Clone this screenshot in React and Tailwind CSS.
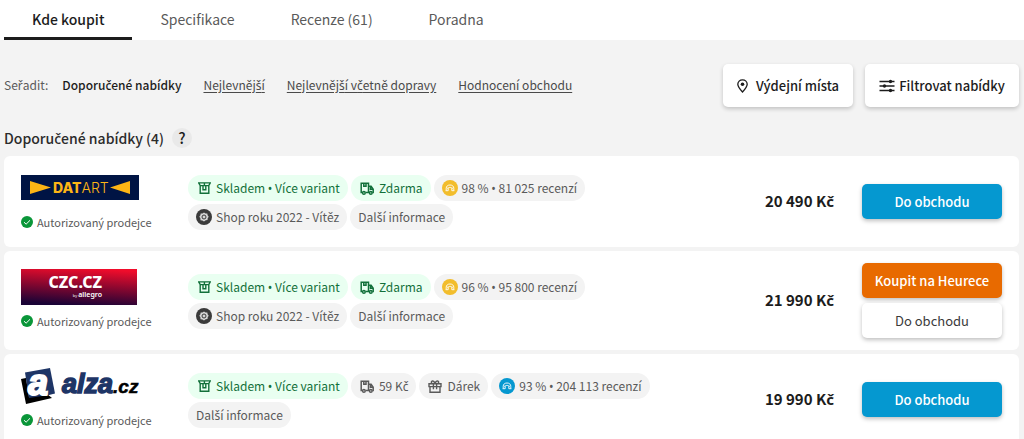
import React, { useState } from "react";

const tabs = ["Kde koupit", "Specifikace", "Recenze (61)", "Poradna"];

const sortOptions = [
  "Doporučené nabídky",
  "Nejlevnější",
  "Nejlevnější včetně dopravy",
  "Hodnocení obchodu",
];

const offers = [
  {
    shop: "datart",
    price: "20 490 Kč",
    chips: [
      { icon: "box", text: "Skladem • Více variant", green: true },
      { icon: "truck", text: "Zdarma", green: true },
      { icon: "gold", text: "98 % • 81 025 recenzí" },
      { icon: "award", text: "Shop roku 2022 - Vítěz" },
      { text: "Další informace" },
    ],
  },
  {
    shop: "czc",
    price: "21 990 Kč",
    buyDirect: true,
    chips: [
      { icon: "box", text: "Skladem • Více variant", green: true },
      { icon: "truck", text: "Zdarma", green: true },
      { icon: "gold", text: "96 % • 95 800 recenzí" },
      { icon: "award", text: "Shop roku 2022 - Vítěz" },
      { text: "Další informace" },
    ],
  },
  {
    shop: "alza",
    price: "19 990 Kč",
    chips: [
      { icon: "box", text: "Skladem • Více variant", green: true },
      { icon: "truck", text: "59 Kč" },
      { icon: "gift", text: "Dárek" },
      { icon: "blue", text: "93 % • 204 113 recenzí" },
      { text: "Další informace" },
    ],
  },
];

// The main font has no č, ř, š and a very wide bullet, take those from Noto Sans
function Czech({ children }) {
  return (
    <span className="whitespace-nowrap">
      {children.split(/([čřš•])/).map((part, index) =>
        index % 2 === 1 ? (
          <span key={index} className="font-['Noto_Sans',sans-serif] leading-none">
            {part}
          </span>
        ) : (
          part
        )
      )}
    </span>
  );
}

function DatartLogo() {
  return (
    <svg width="118" height="25" viewBox="0 0 118 25" role="img" aria-label="Datart">
      <rect width="118" height="25" fill="#001444" />
      <path d="M9 6v13l21-6.5zM109 6v13l-20-6.5z" fill="#fdb515" />
      <text x="32" y="17.5" fontSize="14" fill="#fdb515" fontFamily="Inter, sans-serif">
        <tspan fontWeight="800">DAT</tspan>
        <tspan fontWeight="300">ART</tspan>
      </text>
    </svg>
  );
}

function CzcLogo() {
  return (
    <svg width="116" height="36" viewBox="0 0 116 36" role="img" aria-label="CZC.cz">
      <defs>
        <linearGradient id="czc" x1="0.65" y1="0" x2="0.45" y2="1">
          <stop offset="0" stopColor="#f00c2b" />
          <stop offset="0.5" stopColor="#85072f" />
          <stop offset="1" stopColor="#1a0336" />
        </linearGradient>
      </defs>
      <rect width="116" height="36" fill="url(#czc)" />
      <g fill="#fff" fontFamily="'Noto Sans', sans-serif">
        <text x="81" y="19" fontSize="16" fontWeight="800" textAnchor="end">
          CZC.CZ
        </text>
        <text x="81" y="28" fontSize="7" fontWeight="600" textAnchor="end">
          <tspan fontSize="4" fontWeight="400">by </tspan>allegro
        </text>
      </g>
    </svg>
  );
}

function AlzaLogo() {
  return (
    <svg
      width="118"
      height="36"
      viewBox="0 0 118 36"
      role="img"
      aria-label="Alza.cz"
      className="overflow-visible"
      fontFamily="'Liberation Sans', sans-serif"
      fontWeight="700"
    >
      <path d="M0 11l5-1 3 19 18-3 5 4-26 6z" fill="#000" />
      <path d="M4 4.500L29 0l5 25.500-6 1.500-20 3z" fill="#1e3566" />
      <text x="7" y="27" fontSize="36" fill="#fff" stroke="#fff" strokeWidth="2" fontStyle="italic">
        a
      </text>
      <text y="25" fontStyle="italic">
        <tspan x="41" fontSize="27" fill="#1e3566" stroke="#1e3566" strokeWidth="1.500">
          alza
        </tspan>
        <tspan fontSize="19" fill="#000" stroke="#000" strokeWidth="0.500">
          .cz
        </tspan>
      </text>
    </svg>
  );
}

function ShopLogo({ shop }) {
  if (shop === "datart") return <DatartLogo />;
  if (shop === "czc") return <CzcLogo />;
  return <AlzaLogo />;
}

function CheckIcon() {
  return (
    <svg width="12" height="12" viewBox="0 0 12 12" aria-hidden="true">
      <circle cx="6" cy="6" r="6" fill="#0a9639" />
      <path d="M3 6.2l2.1 2L9 4.3" fill="none" stroke="#fff" />
    </svg>
  );
}

function BoxIcon() {
  return (
    <svg width="13" height="12" viewBox="0 0 13 12" fill="none" stroke="currentColor" strokeWidth="1.4" aria-hidden="true">
      <path d="M2.200 3.700v7.500h8.600V3.700M.7.900l1.500 2.700h8.600L12.300.9zM5 3.700v4h2.800v-4M6.400.9v2.700" />
    </svg>
  );
}

function TruckIcon() {
  return (
    <svg width="14" height="13" viewBox="0 0 14 13" fill="none" stroke="currentColor" strokeWidth="1.5" aria-hidden="true">
      <path d="M2.2 10.500H1.200V1.200h7.300v9.300H5.600M3.800 1.200v3h2.200v-3M8.500 4.200h2.600l2.100 3v3.300h-.9M8.900 10.500h.4M10.500 4.500v2.700h2.500" />
      <circle cx="3.9" cy="10.9" r="1.300" />
      <circle cx="10.8" cy="10.9" r="1.300" />
    </svg>
  );
}

function GiftIcon() {
  return (
    <svg width="14" height="13" viewBox="0 0 14 13" fill="none" stroke="currentColor" strokeWidth="1.4" aria-hidden="true">
      <path d="M1 3.800h12v2.800H1zM2 6.600v5.700h10V6.600M5.400 3.800v5.400M8.600 3.800v5.400M7 3.600C6.400 1.400 5 .7 4 1.100c-1 .5-.8 2 .4 2.600M7 3.600c.6-2.200 2-2.900 3-2.500 1 .5.8 2-.4 2.600" />
    </svg>
  );
}

function AwardIcon() {
  return (
    <svg width="16" height="16" viewBox="0 0 16 16" aria-hidden="true">
      <circle cx="8" cy="8" r="8" fill="#3b3b3b" />
      <path
        d="M8 3.400l1.500 1 1.800 0 .3 1.800 1.100 1.500-1 1.500-.2 1.900-1.800.2L8 12.600l-1.600-1.200-1.900-.2-.1-1.900-1.100-1.500 1.100-1.600.3-1.800h1.800z"
        fill="#d6d6d6"
      />
      <circle cx="8" cy="8" r="2" fill="none" stroke="#3b3b3b" />
    </svg>
  );
}

function RatingIcon({ fill }) {
  return (
    <svg width="16" height="16" viewBox="0 0 16 16" aria-hidden="true">
      <circle cx="8" cy="8" r="8" fill={fill} />
      <path
        d="M4.200 10.500V8.300C4.200 6.200 5.700 5 8 5s3.800 1.200 3.800 3.300v2.200M3.600 10.700h2.600V9c0-1 .8-1.600 1.800-1.600s1.800.6 1.800 1.600v1.700h2.600M6.300 7.300l-1 1.400M9.700 7.300l1 1.400"
        fill="none"
        stroke="#fff"
        strokeWidth="0.9"
        strokeLinejoin="round"
      />
    </svg>
  );
}

function ChipIcon({ name }) {
  switch (name) {
    case "box":
      return <BoxIcon />;
    case "truck":
      return <TruckIcon />;
    case "gift":
      return <GiftIcon />;
    case "award":
      return <AwardIcon />;
    case "gold":
      return <RatingIcon fill="#f2bd2c" />;
    case "blue":
      return <RatingIcon fill="#0598d0" />;
    default:
      return null;
  }
}

function Chip({ chip }) {
  return (
    <li
      className={
        chip.green
          ? "flex h-[26px] items-center rounded-full bg-[#e9fff1] px-2 text-[#12703a]"
          : "flex h-[26px] items-center rounded-full bg-[#f3f3f3] px-2 text-[#5a5a5a]"
      }
    >
      {chip.icon && (
        <span className="mr-1 flex w-4 justify-center">
          <ChipIcon name={chip.icon} />
        </span>
      )}
      <Czech>{chip.text}</Czech>
    </li>
  );
}

function Offer({ offer }) {
  return (
    <article className="flex min-h-[91px] items-center rounded-md bg-white px-[17px] py-3">
      <div className="w-[167px] shrink-0 pb-1">
        <div className="flex h-9 items-center">
          <ShopLogo shop={offer.shop} />
        </div>
        <p className="mt-2 flex items-center gap-1 text-[11px] leading-4 text-[#5a5a5a]">
          <CheckIcon />
          Autorizovaný prodejce
        </p>
      </div>
      <ul className="flex min-w-0 flex-1 flex-wrap gap-[3px] pt-0.5 text-[12px]">
        {offer.chips.map((chip) => (
          <Chip key={chip.text} chip={chip} />
        ))}
      </ul>
      <p className="w-[100px] shrink-0 text-right text-[15px] font-bold text-[#1c1c1c]">
        <Czech>{offer.price}</Czech>
      </p>
      <div className="ml-7 flex w-[140px] shrink-0 flex-col gap-[5px] text-[13px]">
        {offer.buyDirect && (
          <button className="h-[35px] rounded-[5px] bg-[#e86a00] font-medium text-white shadow-[0_2px_4px_rgba(0,0,0,0.25)]">
            Koupit na Heurece
          </button>
        )}
        <button
          className={
            offer.buyDirect
              ? "h-[35px] rounded-[5px] bg-white text-[#3b3b3b] shadow-[0_2px_4px_rgba(0,0,0,0.25)]"
              : "h-[35px] rounded-[5px] bg-[#0598d0] font-medium text-white shadow-[0_2px_4px_rgba(0,0,0,0.25)]"
          }
        >
          Do obchodu
        </button>
      </div>
    </article>
  );
}

function App() {
  const [activeTab, setActiveTab] = useState(tabs[0]);
  const [sort, setSort] = useState(sortOptions[0]);

  return (
    <div className="h-screen overflow-hidden bg-[#f3f3f3] font-['Noto_Sans_CJK_SC','Noto_Sans',sans-serif] text-[#5a5a5a]">
      <nav className="flex h-10 bg-white pl-1 text-[14px]">
        {tabs.map((tab) => (
          <button
            key={tab}
            onClick={() => setActiveTab(tab)}
            className={
              tab === activeTab
                ? "border-b-3 border-[#1c1c1c] px-7 pt-0.5 font-medium text-[#1c1c1c]"
                : "border-b-3 border-transparent px-7 pt-0.5"
            }
          >
            {tab}
          </button>
        ))}
      </nav>

      <main className="pr-[5px] pl-1">
        <div className="flex items-center justify-between pt-6">
          <div className="flex items-center pb-0.5 text-[12px]">
            <span className="mr-3.5">
              <Czech>Seřadit:</Czech>
            </span>
            <div className="flex gap-[22px]">
              {sortOptions.map((option) => (
                <button
                  key={option}
                  onClick={() => setSort(option)}
                  className={
                    option === sort
                      ? "font-medium text-[#1c1c1c]"
                      : "text-[#4a4a4a] underline underline-offset-2"
                  }
                >
                  <Czech>{option}</Czech>
                </button>
              ))}
            </div>
          </div>
          <div className="flex gap-3 text-[13px] font-medium text-[#1c1c1c]">
            <button className="flex h-[43px] w-[130px] items-center justify-center gap-2 rounded-[5px] bg-white shadow-[0_2px_4px_rgba(0,0,0,0.2)]">
              <svg width="11" height="14" viewBox="0 0 11 14" aria-hidden="true">
                <path
                  d="M5.5.8C2.8.8.8 2.800.8 5.300.8 8 5.500 13 5.500 13s4.700-5 4.700-7.700c0-2.500-2-4.500-4.700-4.500z"
                  fill="none"
                  stroke="currentColor"
                  strokeWidth="1.3"
                />
                <circle cx="5.5" cy="5.3" r="1.8" fill="currentColor" />
              </svg>
              Výdejní místa
            </button>
            <button className="flex h-[43px] w-[154px] items-center justify-center gap-1 rounded-[5px] bg-white shadow-[0_2px_4px_rgba(0,0,0,0.2)]">
              <svg width="16" height="14" viewBox="0 0 16 14" fill="currentColor" aria-hidden="true">
                <path d="M.5 2.500h15M.5 7h15M.5 11.500h15" stroke="currentColor" strokeWidth="1.300" />
                <circle cx="11.500" cy="2.500" r="1.700" />
                <circle cx="5.500" cy="7" r="1.700" />
                <circle cx="11.500" cy="11.500" r="1.700" />
              </svg>
              Filtrovat nabídky
            </button>
          </div>
        </div>

        <div className="mt-[21px] flex h-5 items-center gap-2">
          <h2 className="text-[14px] font-medium text-[#2b2b2b]">
            <Czech>Doporučené nabídky (4)</Czech>
          </h2>
          <button
            aria-label="Nápověda"
            className="flex size-5 items-center justify-center rounded-full bg-[#e9e9e9] text-[15px] font-medium text-[#1c1c1c]"
          >
            ?
          </button>
        </div>

        <div className="mt-2 flex flex-col gap-1">
          {offers.map((offer) => (
            <Offer key={offer.shop} offer={offer} />
          ))}
        </div>
      </main>
    </div>
  );
}

export default App;
